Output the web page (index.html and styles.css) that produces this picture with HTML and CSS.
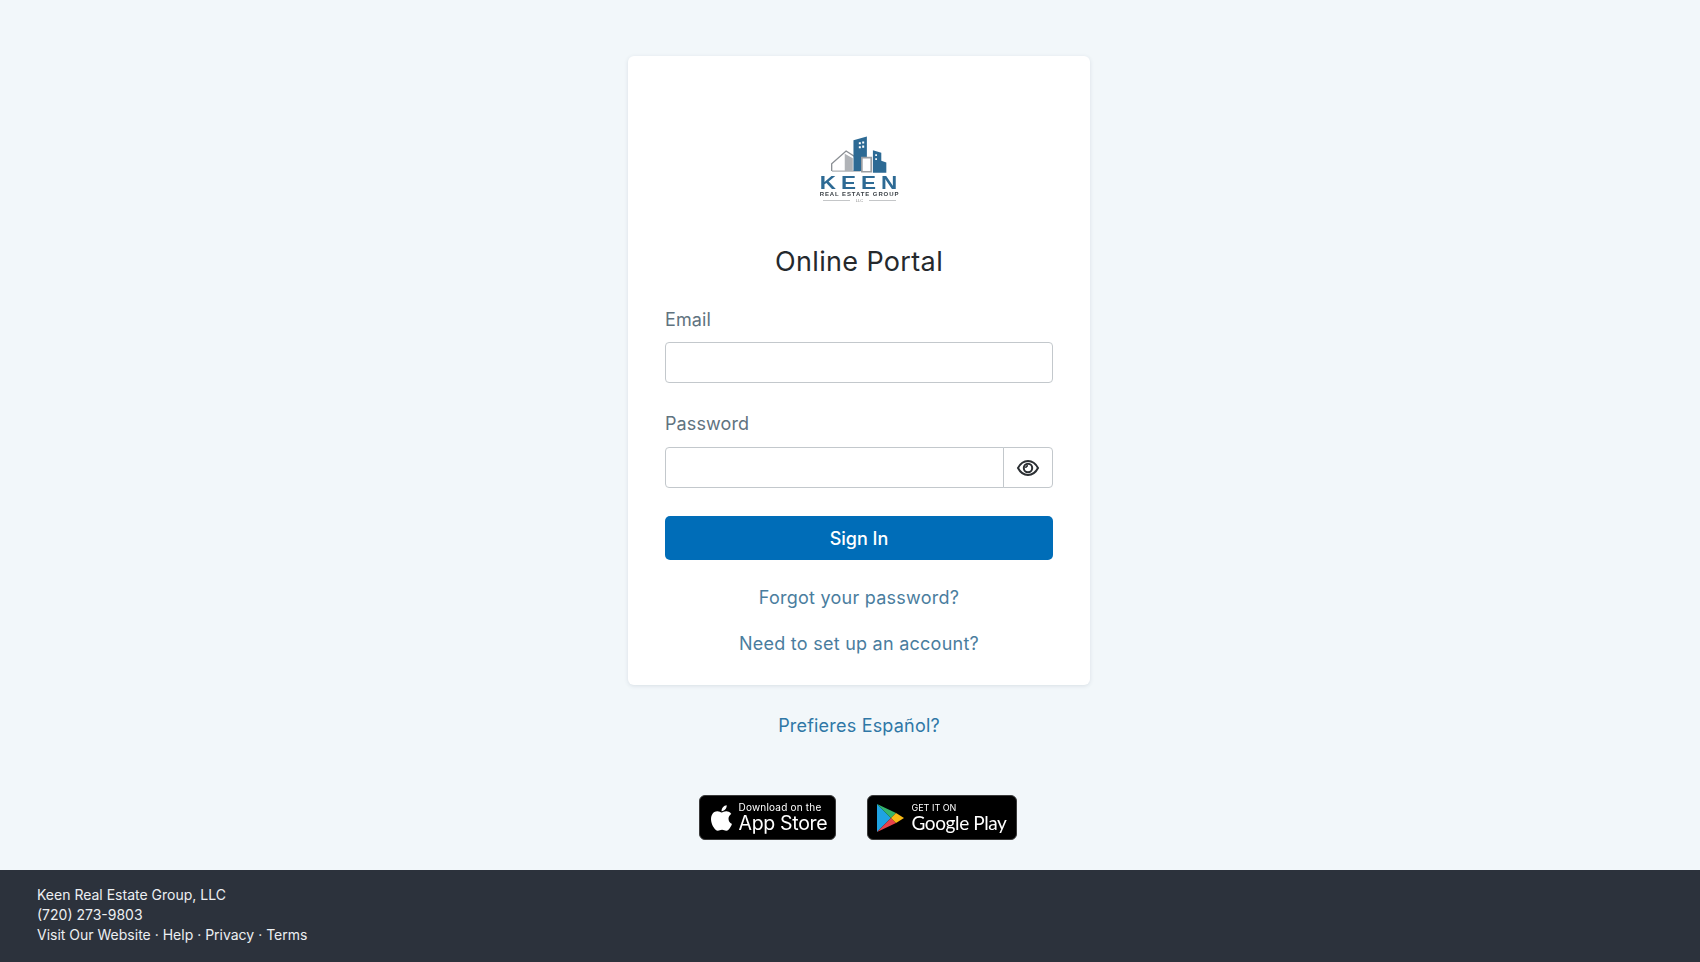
FILE: index.html
```html
<!DOCTYPE html>
<html lang="en">
<head>
    <meta charset="UTF-8">
    <title>Online Portal</title>
    <link rel="stylesheet" href="styles.css">
</head>
<body>
    <main class="page">
        <div class="card">
            <div class="logo">
                <svg class="logo-art" width="57" height="39" viewBox="155 45 170 115">
                    <path d="M157 152v-22l43-38 40 26v10" fill="none" stroke="#8b8f94" stroke-width="4"/>
                    <path d="M158 152h85" stroke="#9a9da1" stroke-width="3"/>
                    <path d="M196 100l24 14v38h-24z" fill="#b0b3b7"/>
                    <path d="M222 60l40-11v103h-40z" fill="#2d6a94"/>
                    <path d="M280 90l25 7v24l15 5v31h-40z" fill="#2d6a94"/>
                    <path d="M247 112h28v42h-28z" fill="#fff" stroke="#9b9ea2" stroke-width="5"/>
                    <path d="M238 66h6v6h-6zM248 64h6v6h-6zM238 78h6v6h-6zM248 76h6v6h-6zM287 102h5v5h-5zM287 114h5v5h-5z" fill="#fff"/>
                </svg>
                <div class="logo-name">KEEN</div>
                <div class="logo-sub">REAL ESTATE GROUP</div>
                <div class="logo-llc"><span></span>LLC<span></span></div>
            </div>
            <h1>Online Portal</h1>
            <form class="login" onsubmit="return false;">
                <label for="email">Email</label>
                <input type="text" id="email" class="field">
                <label for="password">Password</label>
                <div class="input-group">
                    <input type="password" id="password" class="field">
                    <button type="button" class="eye-btn" aria-label="Show password">
                        <svg width="24" height="24" viewBox="0 0 24 24" fill="none" stroke="#2b2f33" stroke-width="2">
                            <path d="M2 12c2.500-4.800 5.800-7 10-7s7.500 2.200 10 7c-2.500 4.800-5.800 7-10 7s-7.500-2.200-10-7z"/>
                            <circle cx="12" cy="12" r="4.200"/>
                            <path d="M9.800 12c0-1.300 1-2.200 2.200-2.200" stroke-width="1.400"/>
                        </svg>
                    </button>
                </div>
                <button type="submit" class="signin">Sign In</button>
            </form>
            <a class="card-link first" href="#">Forgot your password?</a>
            <a class="card-link" href="#">Need to set up an account?</a>
        </div>
        <a class="lang" href="#">Prefieres Español?</a>
        <div class="stores">
            <a class="badge apple" href="#">
                <svg width="24" height="28" viewBox="0 0 24 29" fill="#fff">
                    <path d="M19.800 15.300c0-3.300 2.700-4.900 2.900-5-1.600-2.300-4-2.600-4.900-2.700-2.100-.2-4 1.200-5.100 1.200s-2.700-1.200-4.400-1.200c-2.300 0-4.400 1.300-5.500 3.300-2.400 4.100-.6 10.200 1.700 13.500 1.100 1.600 2.500 3.400 4.200 3.400 1.700-.1 2.300-1.100 4.400-1.100s2.600 1.100 4.400 1 2.900-1.600 4-3.300c1.300-1.900 1.800-3.700 1.800-3.800-.1 0-3.500-1.300-3.500-5.300z"/>
                    <path d="M16.500 5.500c.9-1.100 1.500-2.600 1.400-4.200-1.300.1-3 .9-3.900 2-.8 1-1.600 2.600-1.400 4.100 1.500.1 3-.8 3.900-1.900z"/>
                </svg>
                <span class="badge-text">
                    <small>Download on the</small>
                    <strong>App Store</strong>
                </span>
            </a>
            <a class="badge google" href="#">
                <svg width="27" height="30" viewBox="0 0 27 30">
                    <path d="M0 1v28L14 15z" fill="#1fa3e2"/>
                    <path d="M0 1l14 14 5-5z" fill="#34b56b"/>
                    <path d="M0 29l14-14 5 5z" fill="#e8434a"/>
                    <path d="M19 10l-5 5 5 5 8-5z" fill="#f7b916"/>
                </svg>
                <span class="badge-text">
                    <small>GET IT ON</small>
                    <strong>Google Play</strong>
                </span>
            </a>
        </div>
    </main>
    <footer class="site-footer">
        <div>Keen Real Estate Group, LLC</div>
        <div>(720) 273-9803</div>
        <div><a href="#">Visit Our Website</a> · <a href="#">Help</a> · <a href="#">Privacy</a> · <a href="#">Terms</a></div>
    </footer>
</body>
</html>
```

FILE: styles.css
```css
* {
    box-sizing: border-box;
}
body {
    font-family: Inter, "Noto Sans", sans-serif;
    background-color: #f2f7fa;
    margin: 0;
    min-height: 100vh;
    display: flex;
    flex-direction: column;
    color: #25292d;
}
a {
    text-decoration: none;
}
.page {
    flex: 1;
    display: flex;
    flex-direction: column;
    align-items: center;
    padding: 56px 0 0 18px;
}
.card {
    width: 462px;
    height: 629px;
    background-color: #fff;
    border-radius: 6px;
    box-shadow: 0 1px 4px rgba(40, 60, 80, 0.12);
    padding: 79px 37px 0;
    text-align: center;
}
.logo {
    height: 68px;
    display: flex;
    flex-direction: column;
    align-items: center;
    margin-left: 1px;
    filter: blur(0.3px);
}
.logo-art {
    display: block;
    flex-shrink: 0;
    margin-bottom: 2px;
}
.logo-name {
    font-family: "Liberation Sans", sans-serif;
    font-size: 18px;
    line-height: 14px;
    font-weight: 700;
    letter-spacing: 4px;
    margin-right: -4px;
    transform: scaleX(1.25);
    color: #2d6a94;
}
.logo-sub {
    font-family: "Liberation Sans", sans-serif;
    font-size: 6px;
    line-height: 7px;
    font-weight: 700;
    letter-spacing: 0.900px;
    margin-top: 1px;
    white-space: nowrap;
    color: #3a4046;
}
.logo-llc {
    display: flex;
    align-items: center;
    gap: 6px;
    font-family: "Liberation Sans", sans-serif;
    font-size: 4px;
    line-height: 5px;
    color: #888;
}
.logo-llc span {
    width: 27px;
    height: 1px;
    background-color: #c4c6c8;
}
h1 {
    font-size: 27px;
    line-height: 34px;
    font-weight: 400;
    margin: 42px 0 0;
    letter-spacing: 0.35px;
}
.login {
    text-align: left;
    margin-top: 29px;
}
label {
    display: block;
    font-size: 18px;
    line-height: 24px;
    letter-spacing: 0.1px;
    color: #5f7380;
    margin-bottom: 10px;
}
.field {
    display: block;
    width: 100%;
    height: 41px;
    border: 1px solid #c3c8cc;
    border-radius: 4px;
    background-color: #fff;
    margin-bottom: 29px;
}
.input-group {
    display: flex;
    margin-bottom: 28px;
    margin-top: 11px;
}
.input-group .field {
    flex: 1;
    margin-bottom: 0;
    border-radius: 4px 0 0 4px;
}
.eye-btn {
    width: 50px;
    height: 41px;
    border: 1px solid #c3c8cc;
    margin-left: -1px;
    border-radius: 0 4px 4px 0;
    background-color: #fff;
    display: flex;
    align-items: center;
    justify-content: center;
    padding: 0;
}
.signin {
    display: block;
    width: 100%;
    height: 44px;
    border: none;
    border-radius: 5px;
    background-color: #006db8;
    color: #fff;
    font-family: inherit;
    font-size: 18px;
    font-weight: 500;
}
.card-link {
    display: block;
    font-size: 18px;
    line-height: 24px;
    letter-spacing: 0.25px;
    color: #4a7d9e;
    margin-top: 22px;
}
.card-link.first {
    margin-top: 26px;
}
.lang {
    font-size: 18px;
    line-height: 24px;
    letter-spacing: 0.2px;
    color: #2f77a6;
    margin-top: 29px;
}
.stores {
    display: flex;
    gap: 31px;
    margin-top: 57px;
    margin-left: -3px;
    filter: blur(0.3px);
}
.badge {
    height: 45px;
    background-color: #000;
    border: 1px solid #3a3a3a;
    border-radius: 6px;
    color: #fff;
    display: flex;
    align-items: center;
}
.badge svg {
    flex-shrink: 0;
}
.apple {
    width: 137px;
    padding-left: 9px;
    gap: 6px;
}
.google {
    width: 150px;
    padding-left: 9px;
    gap: 8px;
}
.badge-text {
    display: flex;
    flex-direction: column;
}
.badge-text small {
    font-size: 10px;
    line-height: 11px;
    letter-spacing: 0.2px;
    white-space: nowrap;
}
.badge-text strong {
    font-size: 19.500px;
    line-height: 20px;
    font-weight: 400;
    letter-spacing: -0.3px;
    white-space: nowrap;
}
.google .badge-text small {
    font-size: 9px;
    letter-spacing: 0;
}
.google .badge-text strong {
    font-family: Lato, sans-serif;
    font-size: 19px;
    letter-spacing: -0.4px;
}
.site-footer {
    height: 92px;
    background-color: #2c323c;
    color: #eceff2;
    padding: 15px 37px;
    font-size: 14px;
    line-height: 20px;
}
.site-footer a {
    color: inherit;
}
```
